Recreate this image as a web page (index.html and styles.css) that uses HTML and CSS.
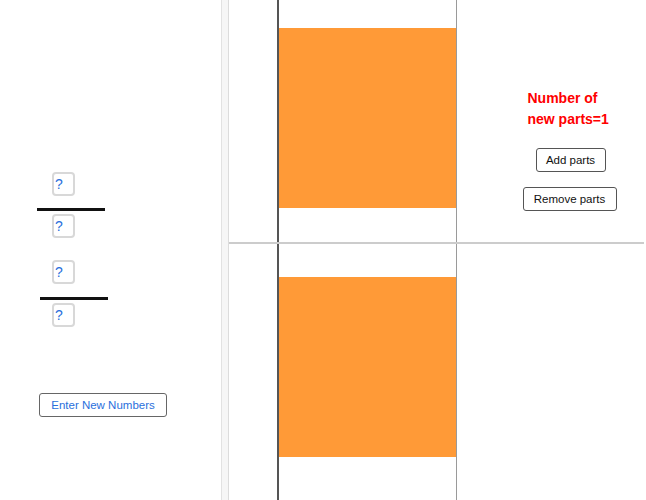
FILE: index.html
```html
<!DOCTYPE html>
<html>
<head>
<meta charset="utf-8">
<link rel="stylesheet" href="styles.css">
</head>
<body>
<div class="app">
  <div class="left">
    <div class="frac frac1">
      <div class="qbox">?</div>
      <div class="bar"></div>
      <div class="qbox">?</div>
    </div>
    <div class="frac frac2">
      <div class="qbox">?</div>
      <div class="bar"></div>
      <div class="qbox">?</div>
    </div>
    <button class="enter">Enter New Numbers</button>
  </div>
  <div class="strip"></div>
  <div class="graph">
    <div class="pane pane-top">
      <div class="gap"></div>
      <div class="vdark"></div>
      <div class="col"><div class="rect rect-top"></div></div>
      <div class="vgray"></div>
      <div class="controls">
        <div class="label">Number of<br>new parts=1</div>
        <button class="btn add">Add parts</button>
        <button class="btn remove">Remove parts</button>
      </div>
    </div>
    <div class="hline"></div>
    <div class="pane pane-bottom">
      <div class="gap"></div>
      <div class="vdark"></div>
      <div class="col"><div class="rect rect-bottom"></div></div>
      <div class="vgray"></div>
      <div class="rest"></div>
    </div>
  </div>
</div>
</body>
</html>
```
FILE: styles.css
```css
html, body {
  margin: 0;
  padding: 0;
  background: #fff;
  font-family: "Liberation Sans", Arial, sans-serif;
}
.app {
  display: flex;
  width: 646px;
  height: 500px;
  overflow: hidden;
}
.left {
  width: 221px;
  flex: none;
  display: flex;
  flex-direction: column;
  align-items: flex-start;
  padding-top: 172px;
  box-sizing: border-box;
}
.frac {
  display: flex;
  flex-direction: column;
  align-items: flex-start;
}
.qbox {
  width: 23px;
  height: 24px;
  box-sizing: border-box;
  border: 2px solid #d8d8d8;
  border-radius: 4px;
  margin-left: 52px;
  color: #2a6fdc;
  font-size: 14px;
  line-height: 21px;
  padding-left: 1px;
}
.bar {
  height: 3px;
  width: 68px;
  background: #111;
}
.frac1 .bar { margin: 12px 0 3px 37px; }
.frac2 { margin-top: 22px; }
.frac2 .bar { margin: 13px 0 3px 40px; }
.enter {
  margin: 66px 0 0 39px;
  width: 128px;
  height: 24px;
  box-sizing: border-box;
  border: 1.5px solid #666;
  border-radius: 3px;
  background: #fff;
  color: #2a6fdc;
  font-family: "Liberation Sans", Arial, sans-serif;
  font-size: 11.5px;
  padding: 0;
}
.strip {
  width: 8px;
  flex: none;
  box-sizing: border-box;
  background: #f6f6f6;
  border-left: 1px solid #e2e2e2;
  border-right: 1px solid #dcdcdc;
}
.graph {
  flex: 1;
  display: flex;
  flex-direction: column;
}
.pane {
  display: flex;
}
.pane-top { height: 242px; }
.pane-bottom { flex: 1; }
.hline {
  height: 2px;
  background: #cccccc;
  margin-right: 2px;
}
.gap { width: 48px; flex: none; }
.vdark { width: 1.5px; flex: none; background: #555; }
.vgray { width: 1px; flex: none; background: #9a9a9a; }
.col { width: 177px; flex: none; }
.rect { background: #ff9a37; height: 180px; }
.rect-top { margin-top: 28px; }
.rect-bottom { margin-top: 33px; }
.rest { flex: 1; }
.controls {
  flex: 1;
  display: flex;
  flex-direction: column;
  align-items: flex-start;
  padding-top: 88px;
}
.label {
  color: #ff0000;
  font-weight: bold;
  font-size: 14px;
  line-height: 21px;
  margin-left: 71px;
}
.btn {
  height: 24px;
  box-sizing: border-box;
  border: 1.5px solid #555;
  border-radius: 3px;
  background: #fff;
  color: #111;
  font-family: "Liberation Sans", Arial, sans-serif;
  font-size: 11.5px;
  padding: 0;
}
.add {
  width: 70px;
  margin: 18px 0 0 79px;
}
.remove {
  width: 94px;
  margin: 15px 0 0 66px;
}
```
